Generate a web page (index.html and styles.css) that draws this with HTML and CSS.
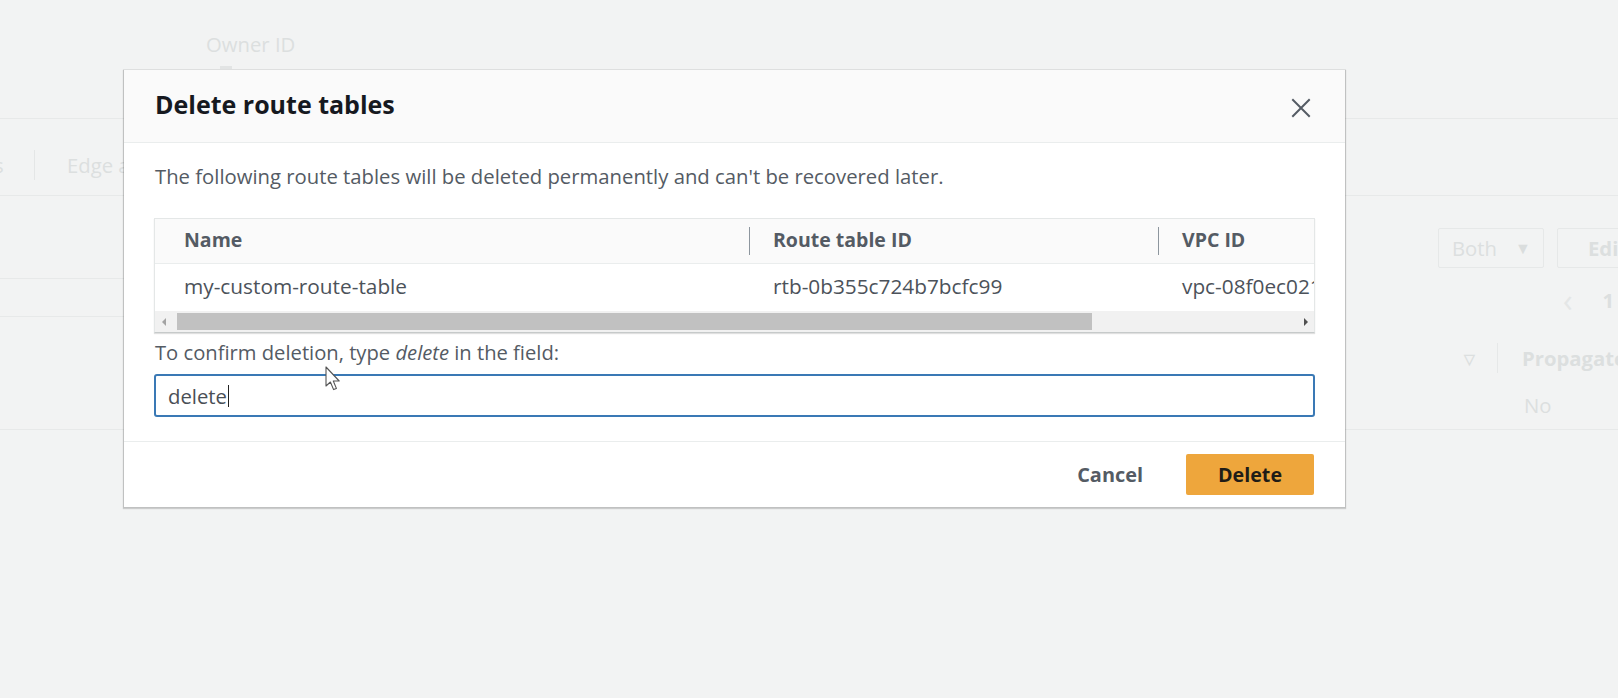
FILE: index.html
```html
<!DOCTYPE html>
<html lang="en">
<head>
<meta charset="utf-8">
<title>Delete route tables</title>
<link rel="stylesheet" href="styles.css">
</head>
<body>
<div class="page">
  <div class="summary">
    <div class="field">
      <div class="field-label">Owner ID</div>
      <div class="field-value"></div>
    </div>
  </div>
  <div class="tabs">
    <span class="tab tab-cut">s</span>
    <span class="tab-sep"></span>
    <span class="tab tab-long">Edge associations</span>
  </div>
  <div class="panel">
    <div class="panel-left">
      <div class="pl-row"></div>
      <div class="pl-row"></div>
    </div>
    <div class="panel-right">
      <div class="pr-actions">
        <span class="ghost-btn ghost-both">Both <span class="caret-down">&#9660;</span></span>
        <span class="ghost-btn ghost-edit">Edit route propagation</span>
      </div>
      <div class="pr-pager"><span class="pager-prev">&lsaquo;</span><span class="pager-num">1</span></div>
      <div class="pr-head">
        <span class="sort-ico">&#9661;</span>
        <span class="pr-sep"></span>
        <span class="pr-col">Propagate</span>
      </div>
      <div class="pr-cell">No</div>
    </div>
  </div>
</div>

<div class="modal" role="dialog" aria-labelledby="dlg-title">
  <div class="modal-header">
    <h2 class="modal-title" id="dlg-title">Delete route tables</h2>
    <button class="close-btn" aria-label="Close">
      <svg width="20" height="20" viewBox="0 0 20 20"><path d="M2 2 L18 18 M18 2 L2 18" stroke="#545b64" stroke-width="2" fill="none" stroke-linecap="square"/></svg>
    </button>
  </div>
  <div class="modal-body">
    <p class="intro">The following route tables will be deleted permanently and can't be recovered later.</p>
    <div class="tbl">
      <div class="tbl-view">
        <div class="tbl-grid">
          <div class="th th-1">Name</div>
          <div class="th th-n"><span class="col-sep"></span>Route table ID</div>
          <div class="th th-n"><span class="col-sep"></span>VPC ID</div>
          <div class="td td-1">my-custom-route-table</div>
          <div class="td td-n">rtb-0b355c724b7bcfc99</div>
          <div class="td td-n">vpc-08f0ec021a3b4c5d6</div>
        </div>
      </div>
      <div class="hscroll">
        <span class="sb-btn"><span class="tri-left"></span></span>
        <span class="sb-track"><span class="sb-thumb"></span></span>
        <span class="sb-btn"><span class="tri-right"></span></span>
      </div>
    </div>
    <p class="confirm-label">To confirm deletion, type <em>delete</em> in the field:</p>
    <div class="text-input" role="textbox">delete<span class="text-caret"></span></div>
  </div>
  <div class="modal-footer">
    <button class="btn-link">Cancel</button>
    <button class="btn-primary">Delete</button>
  </div>
</div>

<svg class="pointer" width="16" height="26" viewBox="0 0 16 26"><path d="M1 1 L1 20 L5.4 16 L8.6 23.6 L11.4 22.4 L8.3 15 L14.2 15 Z" fill="#ffffff" stroke="#555" stroke-width="1.1" stroke-linejoin="round"/></svg>
</body>
</html>
```

FILE: styles.css
```css
* { box-sizing: border-box; }
html, body { margin: 0; padding: 0; }
body {
  width: 1618px;
  height: 698px;
  overflow: hidden;
  background: #f2f3f3;
  font-family: "Open Sans", "Noto Sans", sans-serif;
  color: #545b64;
  position: relative;
}

/* ---------- faded page behind the dialog ---------- */
.page { color: #dcdfdf; }
.summary { height: 118px; padding: 30px 0 0 206px; }
.field-label { font-size: 20.3px; line-height: 28px; }
.field-value { width: 12px; height: 3px; background: #e2e4e4; margin: 8px 0 0 14px; }
.tabs {
  height: 78px;
  border-top: 1px solid #e7e9e9;
  border-bottom: 1px solid #e7e9e9;
  display: flex;
  align-items: center;
  padding-top: 16px;
  white-space: nowrap;
  font-size: 20.3px;
}
.tabs > * { flex: none; }
.tab-cut { width: 34px; margin-left: -6px; }
.tab-sep { width: 1px; height: 30px; background: #e4e6e6; margin: 0 32px 0 6px; }
.tab-long { width: 57px; overflow: hidden; }
.panel {
  height: 234px;
  border-bottom: 1px solid #e7e9e9;
  display: flex;
  justify-content: space-between;
}
.panel-left { width: 124px; padding-top: 82px; }
.pl-row { border-top: 1px solid #e7e9e9; height: 38px; }
.panel-right {
  width: 268px;
  overflow: hidden;
  white-space: nowrap;
  padding-top: 32px;
  font-size: 20.3px;
}
.pr-actions { display: flex; gap: 13px; padding-left: 88px; width: 600px; }
.ghost-btn {
  flex: none;
  height: 40px;
  border: 1px solid #e6e8e8;
  border-radius: 2px;
  display: inline-flex;
  align-items: center;
  font-weight: 700;
}
.ghost-both { width: 106px; padding-left: 13px; gap: 18px; font-weight: 400; }
.caret-down { font-size: 16px; color: #dadddd; }
.ghost-edit { padding-left: 30px; padding-right: 16px; }
.pr-pager { display: flex; align-items: center; height: 32px; margin-top: 16px; padding-left: 213px; gap: 30px; font-weight: 700; }
.pager-prev { font-size: 32px; font-weight: 400; line-height: 1; color: #e4e6e6; }
.pr-head { display: flex; align-items: center; height: 30px; margin-top: 27px; padding-left: 114px; font-weight: 700; width: 600px; }
.pr-head > * { flex: none; }
.sort-ico { font-size: 14px; width: 33px; }
.pr-sep { width: 1px; height: 30px; background: #e6e8e8; margin-right: 24px; }
.pr-cell { padding-left: 174px; margin-top: 17px; line-height: 30px; }

/* ---------- dialog ---------- */
.modal {
  position: absolute;
  left: 124px;
  top: 70px;
  width: 1221px;
  background: #ffffff;
  box-shadow: 0 1px 1px 1px rgba(0, 0, 0, 0.16), 0 0 0 1px rgba(0, 0, 0, 0.05);
}
.modal-header {
  height: 73px;
  background: #fafafa;
  border-bottom: 1px solid #eaeded;
  display: flex;
  align-items: center;
  justify-content: space-between;
  padding: 0 34px 4px 31px;
}
.modal-title {
  margin: 0;
  font-size: 25px;
  line-height: 32px;
  font-weight: 700;
  color: #16191f;
}
.close-btn {
  border: 0;
  background: none;
  padding: 0;
  margin-top: 8px;
  width: 20px;
  height: 20px;
  display: flex;
}
.modal-body { padding: 21px 30px 24px 30px; }
.intro {
  margin: 0 0 30px 1px;
  font-size: 20.3px;
  line-height: 24px;
  color: #545b64;
}
.tbl {
  border: 1px solid #e4e7e7;
  border-bottom-color: #c6caca;
  box-shadow: 0 1px 1px rgba(0, 0, 0, 0.12);
}
.tbl-view { overflow: hidden; }
.tbl-grid {
  display: grid;
  grid-template-columns: 594px 409px 420px;
  width: 1423px;
}
.th {
  height: 45px;
  padding-bottom: 4px;
  background: #fafafa;
  border-bottom: 1px solid #eaeded;
  display: flex;
  align-items: center;
  font-size: 19.5px;
  font-weight: 700;
  color: #545b64;
  white-space: nowrap;
}
.th .col-sep { margin-top: 4px; }
.th-1, .td-1 { padding-left: 29px; }
.col-sep { width: 1px; height: 28px; background: #8d969e; margin-right: 23px; flex: none; }
.td {
  height: 47px;
  padding-bottom: 3px;
  display: flex;
  align-items: center;
  font-size: 20.8px;
  color: #4c525a;
  white-space: nowrap;
}
.td-n { padding-left: 24px; }
.hscroll {
  height: 21px;
  background: #f1f1f1;
  display: flex;
  align-items: center;
}
.sb-btn { width: 17px; height: 21px; display: flex; align-items: center; justify-content: center; flex: none; }
.tri-left { width: 0; height: 0; border-top: 4px solid transparent; border-bottom: 4px solid transparent; border-right: 4px solid #a3a3a3; }
.tri-right { width: 0; height: 0; border-top: 4px solid transparent; border-bottom: 4px solid transparent; border-left: 4px solid #505050; }
.sb-track { flex: 1; height: 21px; display: flex; align-items: center; }
.sb-thumb { width: 915px; height: 17px; background: #c1c1c1; margin-left: 5px; }
.confirm-label {
  margin: 7px 0 10px 1px;
  font-size: 20.2px;
  line-height: 24px;
  color: #545b64;
}
.confirm-label em { font-style: italic; }
.text-input {
  height: 43px;
  border: 2px solid #3a79b5;
  border-radius: 3px;
  padding: 0 12px;
  display: flex;
  align-items: center;
  font-size: 20.3px;
  color: #4a4f56;
}
.text-caret { width: 1.5px; height: 22px; background: #222; margin-left: 1px; }
.modal-footer {
  height: 66px;
  border-top: 1px solid #eaeded;
  display: flex;
  align-items: center;
  justify-content: flex-end;
  gap: 23px;
  padding: 0 31px 1px 0;
}
.btn-link {
  border: 0;
  background: none;
  font-family: inherit;
  font-size: 19.9px;
  font-weight: 700;
  color: #545b64;
  padding: 0 20px;
  height: 41px;
}
.btn-primary {
  width: 128px;
  height: 41px;
  border: 0;
  border-radius: 2px;
  background: #eea63c;
  font-family: inherit;
  font-size: 19.7px;
  font-weight: 700;
  color: #1f1c17;
}

.pointer { position: absolute; left: 325px; top: 366px; }
```
